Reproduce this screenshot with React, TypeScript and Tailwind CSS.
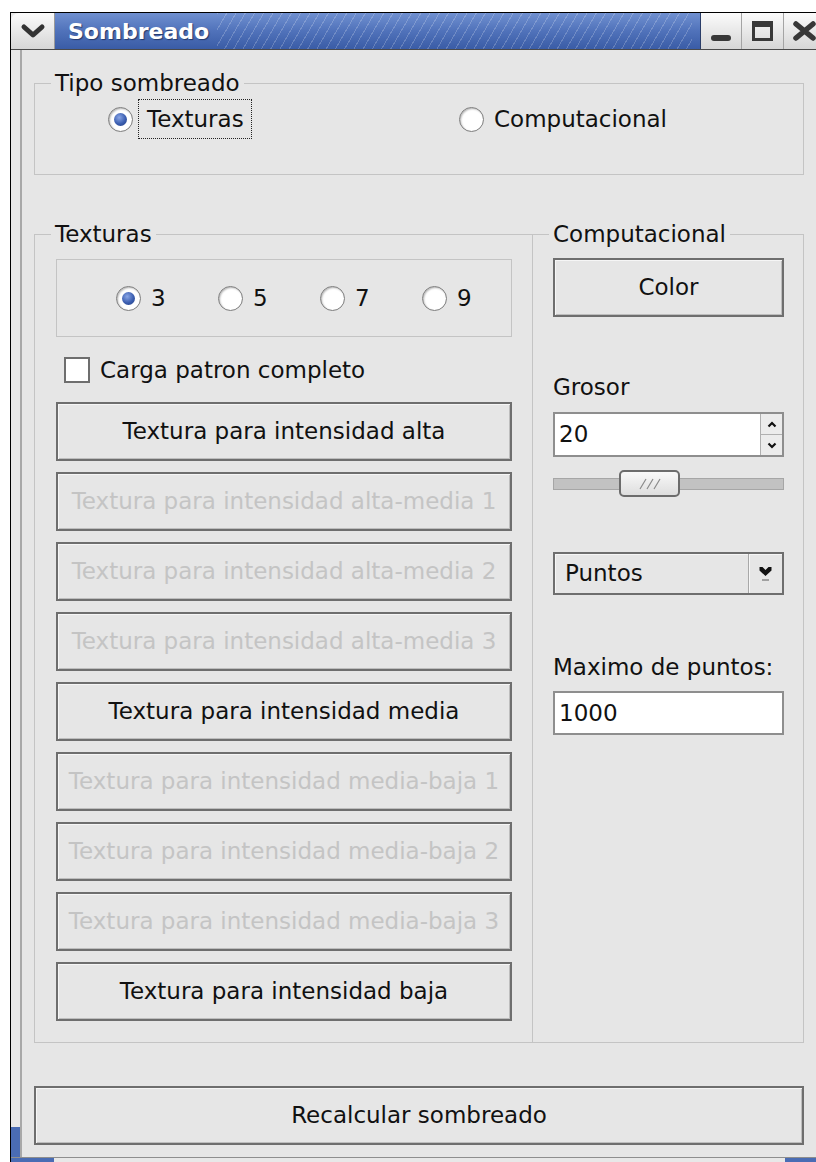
import React from 'react';

type GroupProps = { title?: string; className?: string; bodyClass?: string; children?: React.ReactNode };

// etched group frame with the caption sitting on the top edge
const Group = ({ title, className = '', bodyClass = '', children }: GroupProps) => (
  <fieldset className={`border border-[#c4c4c4] min-w-0 ${className}`}>
    {title && <legend className="ml-[16px] px-[4px] h-[26px] leading-[26px]">{title}</legend>}
    <div className={bodyClass}>{children}</div>
  </fieldset>
);

const Radio = ({ checked = false }: { checked?: boolean }) => (
  <span className="w-[25px] h-[25px] shrink-0 rounded-full border border-[#7c7c7c] bg-white shadow-[inset_1px_1px_2px_rgba(0,0,0,0.3)] flex items-center justify-center">
    {checked && (
      <span className="w-[13px] h-[13px] rounded-full bg-[radial-gradient(circle_at_40%_35%,#8aa6e6_0%,#3b5eb0_55%,#213c80_100%)]" />
    )}
  </span>
);

type ButtonProps = { children?: React.ReactNode; disabled?: boolean; className?: string };

const Button = ({ children, disabled = false, className = '' }: ButtonProps) => (
  <div
    className={`flex items-center justify-center border-2 border-[#6e6e6e] bg-[#e6e6e6] shadow-[inset_1px_1px_0_#f6f6f6,inset_-1px_-1px_0_#bdbdbd] ${
      disabled ? 'text-[#c4c4c4]' : 'text-[#111]'
    } ${className}`}
  >
    {children}
  </div>
);

const textureButtons = [
  { label: 'Textura para intensidad alta', disabled: false },
  { label: 'Textura para intensidad alta-media 1', disabled: true },
  { label: 'Textura para intensidad alta-media 2', disabled: true },
  { label: 'Textura para intensidad alta-media 3', disabled: true },
  { label: 'Textura para intensidad media', disabled: false },
  { label: 'Textura para intensidad media-baja 1', disabled: true },
  { label: 'Textura para intensidad media-baja 2', disabled: true },
  { label: 'Textura para intensidad media-baja 3', disabled: true },
  { label: 'Textura para intensidad baja', disabled: false },
];

const TitleBar = () => (
  <div className="h-[37px] flex border-b border-[#4a4a4a]">
    <div className="w-[44px] rounded-tl-[8px] bg-gradient-to-b from-[#fbfbfb] to-[#d6d6d6] border-r border-[#9a9a9a] flex items-center justify-center">
      <svg width="26" height="16" viewBox="0 0 26 16">
        <path d="M4 4 L13 12 L22 4" fill="none" stroke="#333" strokeWidth="5" strokeLinecap="round" strokeLinejoin="round" />
      </svg>
    </div>
    <div className="w-[646px] flex items-center bg-gradient-to-b from-[#7090d0] via-[#5072ba] to-[#3a5ca6] border-r border-[#2a3d68]">
      <span className="pl-[13px] pr-[8px] text-white font-bold text-[22px] [text-shadow:1px_1px_1px_#23386a]">Sombreado</span>
      <div className="flex-1 self-stretch mr-[8px] bg-[repeating-linear-gradient(120deg,rgba(255,255,255,0.2)_0px,rgba(255,255,255,0.2)_1px,transparent_1px,transparent_8px)]" />
    </div>
    <div className="w-[41px] bg-gradient-to-b from-[#fbfbfb] to-[#d6d6d6] border-r border-[#a4a4a4] flex items-end justify-center pb-[8px]">
      <span className="w-[20px] h-[6px] rounded-[3px] bg-[#383838]" />
    </div>
    <div className="w-[42px] bg-gradient-to-b from-[#fbfbfb] to-[#d6d6d6] border-r border-[#a4a4a4] flex items-center justify-center">
      <span className="w-[21px] h-[20px] border-[3px] border-t-[6px] border-[#383838]" />
    </div>
    <div className="flex-1 bg-gradient-to-b from-[#fbfbfb] to-[#d6d6d6] flex items-center pl-[8px]">
      <svg width="26" height="22" viewBox="0 0 26 22">
        <path d="M4 4 L21 18 M21 4 L4 18" stroke="#383838" strokeWidth="5.5" strokeLinecap="round" />
      </svg>
    </div>
  </div>
);

const SpinBox = () => (
  <div className="h-[45px] flex border-2 border-[#8e8e8e] bg-white">
    <div className="flex-1 flex items-center pl-[4px]">20</div>
    <div className="w-[22px] flex flex-col border-l border-[#b0b0b0] bg-[#ececec]">
      <div className="flex-1 flex items-center justify-center border-b border-[#b0b0b0]">
        <svg width="10" height="7" viewBox="0 0 10 7">
          <path d="M1.5 5.5 L5 2 L8.5 5.5" fill="none" stroke="#111" strokeWidth="2.2" />
        </svg>
      </div>
      <div className="flex-1 flex items-center justify-center">
        <svg width="10" height="7" viewBox="0 0 10 7">
          <path d="M1.5 1.5 L5 5 L8.5 1.5" fill="none" stroke="#111" strokeWidth="2.2" />
        </svg>
      </div>
    </div>
  </div>
);

const Slider = () => (
  <div className="h-[27px] flex items-center">
    <div className="w-[66px] h-[12px] bg-[#c2c2c2] border border-[#a6a6a6] border-r-0" />
    <div className="w-[61px] h-[27px] rounded-[5px] border-2 border-[#6c6c6c] bg-gradient-to-b from-[#f8f8f8] to-[#dedede] flex items-center justify-center">
      <svg width="28" height="12" viewBox="0 0 28 12">
        <path d="M4 11 L10 1 M11 11 L17 1 M18 11 L24 1" stroke="#8a8a8a" strokeWidth="1.2" />
      </svg>
    </div>
    <div className="flex-1 h-[12px] bg-[#c2c2c2] border border-[#a6a6a6] border-l-0" />
  </div>
);

const ComboBox = () => (
  <div className="h-[43px] flex border-2 border-[#6e6e6e] bg-[#e6e6e6] shadow-[inset_1px_1px_0_#f6f6f6]">
    <div className="flex-1 flex items-center pl-[10px]">Puntos</div>
    <div className="w-[34px] border-l border-[#a8a8a8] shadow-[inset_1px_0_0_#f6f6f6] flex items-center justify-center">
      <svg width="15" height="18" viewBox="0 0 15 18">
        <path d="M1.5 2 L4.5 2 L7.5 5 L10.5 2 L13.5 2 L13.5 5.5 L7.5 11 L1.5 5.5 Z" fill="#111" />
        <rect x="4" y="14" width="7" height="2" fill="#a0a0a0" />
      </svg>
    </div>
  </div>
);

export default function App() {
  return (
    <div className="w-[816px] h-[1162px] bg-white overflow-hidden font-['DejaVu_Sans',sans-serif] text-[23px] text-[#111]">
      <div className="ml-[10px] mt-[12px] w-[830px] h-[1150px] border-l border-t border-black bg-[#e6e6e6] flex flex-col">
        <TitleBar />
        <div className="flex-1 flex min-h-0">
          {/* left frame edge with the resize corner */}
          <div className="w-[9px] flex flex-col justify-end bg-[#e8e8e8]">
            <div className="h-[30px] bg-[#4a6cb4]" />
          </div>
          <div className="flex-1 border-l-2 border-[#a8a8a8] bg-[#e6e6e6]">
            <div className="w-[770px] ml-[12px] mt-[20px] flex flex-col">
              <Group title="Tipo sombreado" bodyClass="pt-[3px] pb-[35px]">
                <div className="h-[40px] pl-[73px] flex items-center">
                  <div className="w-[351px] flex items-center">
                    <Radio checked />
                    <span className="ml-[5px] h-[40px] pl-[8px] pr-[7px] flex items-center border border-dotted border-[#222]">Texturas</span>
                  </div>
                  <div className="flex items-center gap-[10px]">
                    <Radio />
                    <span>Computacional</span>
                  </div>
                </div>
              </Group>

              <div className="mt-[46px] flex">
                <Group title="Texturas" className="w-[499px] shrink-0" bodyClass="pt-[12px] pl-[21px] pr-[20px] pb-[21px]">
                  <div className="h-[78px] border border-[#c4c4c4] flex items-center pl-[59px]">
                    {['3', '5', '7', '9'].map((n, i) => (
                      <div key={n} className={`flex items-center gap-[10px] ${i < 3 ? 'w-[102px]' : ''}`}>
                        <Radio checked={i === 0} />
                        <span>{n}</span>
                      </div>
                    ))}
                  </div>
                  <div className="mt-[20px] h-[26px] ml-[8px] flex items-center gap-[10px]">
                    <span className="w-[26px] h-[26px] border-2 border-[#6e6e6e] bg-white" />
                    <span>Carga patron completo</span>
                  </div>
                  <div className="mt-[19px] flex flex-col gap-[11px]">
                    {textureButtons.map((b) => (
                      <Button key={b.label} disabled={b.disabled} className="h-[59px]">
                        {b.label}
                      </Button>
                    ))}
                  </div>
                </Group>

                <Group title="Computacional" className="w-[271px] shrink-0 border-l-0" bodyClass="pt-[11px] pl-[20px] pr-[19px]">
                  <Button className="h-[59px]">Color</Button>
                  <div className="mt-[57px] h-[26px] leading-[26px]">Grosor</div>
                  <div className="mt-[12px]">
                    <SpinBox />
                  </div>
                  <div className="mt-[13px]">
                    <Slider />
                  </div>
                  <div className="mt-[55px]">
                    <ComboBox />
                  </div>
                  <div className="mt-[59px] h-[26px] leading-[26px] whitespace-nowrap">Maximo de puntos:</div>
                  <div className="mt-[11px] h-[44px] border-2 border-[#8e8e8e] bg-white flex items-center pl-[4px]">1000</div>
                </Group>
              </div>

              <Button className="mt-[43px] h-[59px]">Recalcular sombreado</Button>
            </div>
          </div>
        </div>
        {/* bottom frame edge */}
        <div className="h-[5px] border-t border-[#8e8e8e] bg-[#e8e8e8] flex">
          <div className="w-[43px] bg-[#4a6cb4]" />
          <div className="w-[731px]" />
          <div className="flex-1 bg-[#4a6cb4]" />
        </div>
      </div>
    </div>
  );
}
